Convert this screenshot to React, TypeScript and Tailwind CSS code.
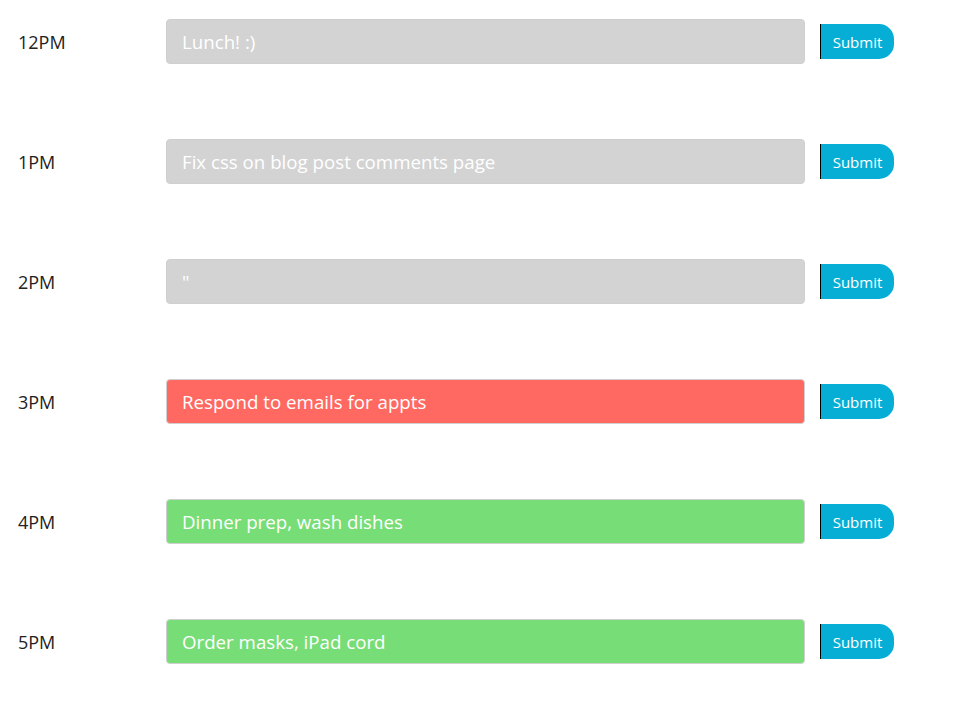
import React from "react";

const rows = [
  { hour: "12PM", text: "Lunch! :)", color: "bg-[#d3d3d3]" },
  { hour: "1PM", text: "Fix css on blog post comments page", color: "bg-[#d3d3d3]" },
  { hour: "2PM", text: "\"", color: "bg-[#d3d3d3]" },
  { hour: "3PM", text: "Respond to emails for appts", color: "bg-[#ff6961]" },
  { hour: "4PM", text: "Dinner prep, wash dishes", color: "bg-[#77dd77]" },
  { hour: "5PM", text: "Order masks, iPad cord", color: "bg-[#77dd77]" },
];

export default function App() {
  return (
    <div className="min-h-[703px] bg-white pt-[19px] font-['Open_Sans',sans-serif]">
      <div className="flex flex-col gap-[75px]">
        {rows.map((r) => (
          <div key={r.hour} className="flex h-[45px] items-center">
            <div className="w-[166px] pl-[18px] pt-[2px] text-[18px] text-[#222]">{r.hour}</div>
            <div
              className={`flex h-[45px] w-[639px] items-center rounded-[4px] border border-[#cfcfcf] ${r.color} pl-[15px] pt-[2px] text-[18.7px] text-white`}
            >
              {r.text}
            </div>
            <button className="ml-[15px] h-[35px] w-[74px] rounded-r-[15px] border-l border-black bg-[#06aed5] pt-[1px] text-[15px] text-white">
              Submit
            </button>
          </div>
        ))}
      </div>
    </div>
  );
}
